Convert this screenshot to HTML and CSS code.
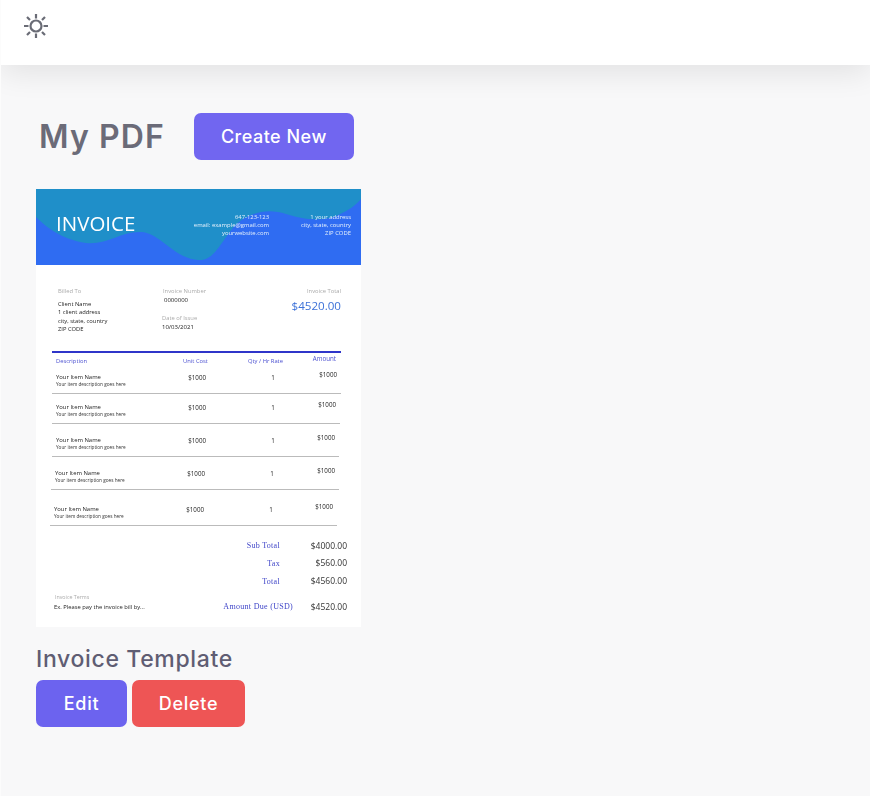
FILE: index.html
```html
<!DOCTYPE html>
<html lang="en">
<head>
<meta charset="utf-8">
<title>My PDF</title>
<link rel="stylesheet" href="styles.css">
</head>
<body>
<header class="topbar">
  <svg class="sun" viewBox="0 0 26 26" fill="none" stroke="currentColor" stroke-width="2.200">
    <circle cx="13" cy="13" r="5.500"/>
    <path d="M13 1v4.500M13 20.500v4.500M1 13h4.500M20.500 13h4.500M4 4l3 3M19 19l3 3M4 22l3-3M19 7l3-3"/>
  </svg>
</header>
<main class="content">
  <div class="title-row">
    <h1 class="title">My PDF</h1>
    <button class="btn btn-create">Create New</button>
  </div>
  <article class="invoice">
    <div class="inv-head">
      <svg class="inv-wave" viewBox="0 0 325 76" preserveAspectRatio="none">
        <path fill="#2f6cf2" d="M0 28C10 38 25 50 50 54C72 56 85 42 105 43C125 44 138 70 163 71C182 72 188 42 207 30C220 22 235 20 250 25C265 30 285 33 300 27C312 22 320 16 325 10V76H0Z"/>
      </svg>
      <div class="inv-brand">INVOICE</div>
      <div class="inv-contact">647-123-123<br>email: example@gmail.com<br>yourwebsite.com</div>
      <div class="inv-address">1 your address<br>city, state, country<br>ZIP CODE</div>
    </div>
    <div class="inv-meta">
      <div class="billed">
        <div class="label">Billed To</div>
        <div class="billed-text">Client Name<br>1 client address<br>city, state, country<br>ZIP CODE</div>
      </div>
      <div class="numbers">
        <div class="label">Invoice Number</div>
        <div class="num-value">0000000</div>
        <div class="label date-label">Date of Issue</div>
        <div class="date-value">10/03/2021</div>
      </div>
      <div class="total-box">
        <div class="label">Invoice Total</div>
        <div class="total-value">$4520.00</div>
      </div>
    </div>
    <div class="table-head">
      <span class="th-desc">Description</span>
      <span class="th-cost">Unit Cost</span>
      <span class="th-qty">Qty / Hr Rate</span>
      <span class="th-amt">Amount</span>
    </div>
    <div class="item item-1">
      <div><div class="item-name">Your Item Name</div><div class="item-desc">Your item description goes here</div></div>
      <div class="item-cost">$1000</div><div class="item-qty">1</div><div class="item-amt">$1000</div>
    </div>
    <div class="item item-2">
      <div><div class="item-name">Your Item Name</div><div class="item-desc">Your item description goes here</div></div>
      <div class="item-cost">$1000</div><div class="item-qty">1</div><div class="item-amt">$1000</div>
    </div>
    <div class="item item-3">
      <div><div class="item-name">Your Item Name</div><div class="item-desc">Your item description goes here</div></div>
      <div class="item-cost">$1000</div><div class="item-qty">1</div><div class="item-amt">$1000</div>
    </div>
    <div class="item item-4">
      <div><div class="item-name">Your Item Name</div><div class="item-desc">Your item description goes here</div></div>
      <div class="item-cost">$1000</div><div class="item-qty">1</div><div class="item-amt">$1000</div>
    </div>
    <div class="item item-5">
      <div><div class="item-name">Your Item Name</div><div class="item-desc">Your item description goes here</div></div>
      <div class="item-cost">$1000</div><div class="item-qty">1</div><div class="item-amt">$1000</div>
    </div>
    <div class="totals">
      <div class="total-row row-sub"><span class="t-label">Sub Total</span><span class="t-value">$4000.00</span></div>
      <div class="total-row row-tax"><span class="t-label">Tax</span><span class="t-value">$560.00</span></div>
      <div class="total-row row-total"><span class="t-label">Total</span><span class="t-value">$4560.00</span></div>
    </div>
    <div class="inv-foot">
      <div class="terms">
        <div class="label">Invoice Terms</div>
        <div class="terms-text">Ex. Please pay the invoice bill by...</div>
      </div>
      <div class="due"><span class="t-label due-label">Amount Due (USD)</span><span class="t-value">$4520.00</span></div>
    </div>
  </article>
  <h2 class="doc-name">Invoice Template</h2>
  <div class="actions">
    <button class="btn btn-edit">Edit</button>
    <button class="btn btn-delete">Delete</button>
  </div>
</main>
</body>
</html>
```

FILE: styles.css
```css
* { box-sizing: border-box; }
html, body { height: 100%; }
body {
  margin: 0;
  display: flex;
  flex-direction: column;
  height: 796px;
  overflow: hidden;
  background: #f8f8f9;
  border-left: 1px solid #fcfcfc;
  font-family: "Open Sans", sans-serif;
}
.topbar {
  height: 65px;
  flex: none;
  background: #fff;
  box-shadow: 0 8px 30px rgba(0, 0, 0, 0.09);
  padding: 13px 0 0 22px;
  position: relative;
}
.sun { display: block; width: 26px; height: 26px; color: #6a6c76; }
.content { padding: 48px 0 0 35px; }
.title-row { display: flex; align-items: center; gap: 29px; height: 47px; }
.title {
  margin: 0 0 0 3px;
  font: 600 32px/1 Inter, sans-serif;
  letter-spacing: 1.100px;
  color: #6b6b78;
}
.btn {
  border: 0;
  border-radius: 7px;
  color: #fff;
  font-family: Inter, sans-serif;
  font-weight: 500;
  font-size: 18px;
  letter-spacing: 0.700px;
  padding: 0;
  text-align: center;
}
.btn-create { width: 160px; height: 47px; background: #7166f0; letter-spacing: 0.500px; }
.invoice {
  width: 325px;
  height: 438px;
  margin-top: 29px;
  background: #fff;
  overflow: hidden;
  color: #222;
  filter: blur(0.3px);
}
.inv-head {
  height: 76px;
  background: #1f8fc9;
  position: relative;
  display: flex;
  color: #e6f1fc;
  font-size: 5.900px;
  line-height: 7.800px;
  text-align: right;
}
.inv-wave { position: absolute; inset: 0; width: 100%; height: 100%; }
.inv-brand {
  position: relative;
  width: 100px;
  margin: 21px 0 0 20px;
  font-size: 20.500px;
  line-height: 26px;
  text-align: left;
  color: #fff;
}
.inv-contact { position: relative; width: 113px; margin-top: 25px; }
.inv-address { position: relative; width: 82px; margin-top: 25px; }
.inv-meta { display: flex; height: 86px; padding-top: 22px; }
.label { font-size: 5.800px; line-height: 8px; color: #aaa; }
.billed { width: 127px; padding-left: 22px; }
.billed-text { margin-top: 5px; font-size: 5.800px; line-height: 8.400px; color: #222; }
.numbers { width: 100px; }
.num-value { margin-left: 1px; margin-top: 1px; font-size: 6px; line-height: 9px; color: #222; }
.date-label { margin: 9px 0 0 -1px; }
.date-value { margin-left: -1px; margin-top: 1px; font-size: 6px; line-height: 9px; color: #222; }
.total-box { width: 78px; text-align: right; }
.total-value { margin-top: 3px; font-size: 11.600px; line-height: 16px; color: #3d72d8; }
.table-head {
  margin: 0 20px 0 16px;
  height: 22px;
  border-top: 2px solid #2f35c9;
  display: grid;
  grid-template-columns: 130px 60px 75px 1fr;
  font-size: 5.800px;
  color: #4a4fd0;
  line-height: 8px;
}
.th-desc { padding: 4px 0 0 4px; }
.th-cost { padding-top: 4px; text-align: center; margin-left: -33px; }
.th-qty { padding-top: 4px; text-align: center; margin-left: -28px; }
.th-amt { padding: 2px 5px 0 0; text-align: right; margin-left: -10px; font-size: 6.200px; }
.item {
  display: grid;
  grid-template-columns: 115px 35px 110px 1fr;
  border-bottom: 1px solid #bbb;
  padding-left: 4px;
  font-size: 6.200px;
  line-height: 8px;
  color: #222;
  margin-left: 16px;
  margin-right: 21px;
}
.item-name { font-size: 5.900px; }
.item-desc { font-size: 4.700px; line-height: 7px; color: #333; white-space: nowrap; }
.item-cost { text-align: right; margin-top: 1px; }
.item-qty { text-align: center; margin-top: 1px; padding-left: 24px; }
.item-amt { text-align: right; padding-right: 4px; margin-top: -2px; }
.item-1 { height: 21px; margin-right: 20px; }
.item-2 { height: 30px; padding-top: 9px; }
.item-3 { height: 33px; padding-top: 12px; margin-right: 22px; }
.item-4 { height: 33px; padding-top: 12px; margin-right: 22px; margin-left: 15px; }
.item-5 { height: 36px; padding-top: 15px; margin-right: 24px; margin-left: 14px; }
.totals { padding-top: 14px; }
.total-row { display: grid; grid-template-columns: 244px 67px; height: 18px; align-items: start; }
.t-label {
  font: 8px/10px "Liberation Serif", serif;
  color: #3f45c8;
  text-align: right;
  padding-top: 1px;
  letter-spacing: 0.300px;
}
.t-value { font-size: 8.500px; line-height: 11px; color: #333; text-align: right; }
.row-tax .t-value, .row-total .t-value { margin-top: -1px; }
.inv-foot { display: flex; margin-top: -1px; padding-left: 18px; }
.terms { width: 150px; }
.terms .label { font-size: 5.300px; margin-left: 1px; }
.terms-text { font-size: 5.800px; line-height: 8px; margin-top: 2px; }
.due { display: flex; margin-top: 8px; margin-left: 18px; }
.due-label { width: 71px; white-space: nowrap; }
.due .t-value { width: 54px; }
.doc-name {
  margin: 19px 0 0;
  font: 500 23px/26px Inter, sans-serif;
  color: #5f5d73;
  letter-spacing: 0.650px;
}
.actions { display: flex; gap: 5px; margin-top: 8px; }
.btn-edit { width: 91px; height: 47px; background: #6c63ef; }
.btn-delete { width: 113px; height: 47px; background: #ee5555; }
```
